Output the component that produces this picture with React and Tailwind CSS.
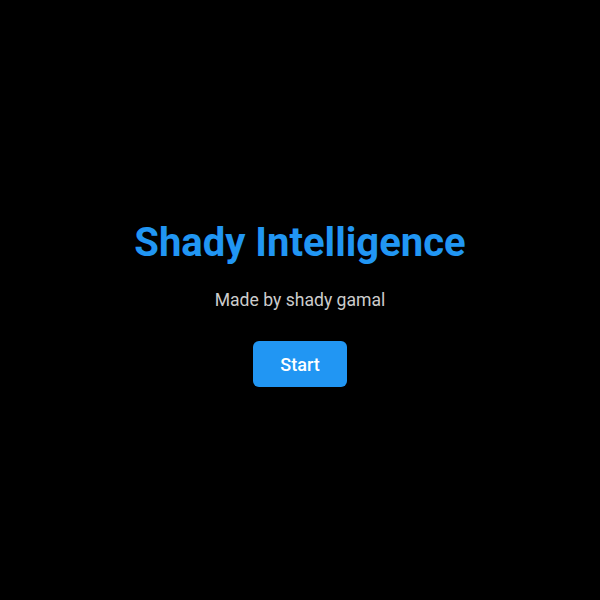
export default function App() {
  return (
    <div
      className="min-h-screen w-full bg-black flex flex-col items-center justify-center pt-[5px]"
      style={{ fontFamily: 'Roboto, "Noto Sans", sans-serif' }}
    >
      <h1 className="text-[40px] font-bold leading-tight text-[#2196f3]">Shady Intelligence</h1>
      <p className="mt-[19px] text-[17.6px] text-[#cccccc]">Made by shady gamal</p>
      <button className="mt-[28px] w-[94px] h-[46px] rounded-md bg-[#2196f3] text-white text-[18px] font-medium">
        Start
      </button>
    </div>
  )
}
